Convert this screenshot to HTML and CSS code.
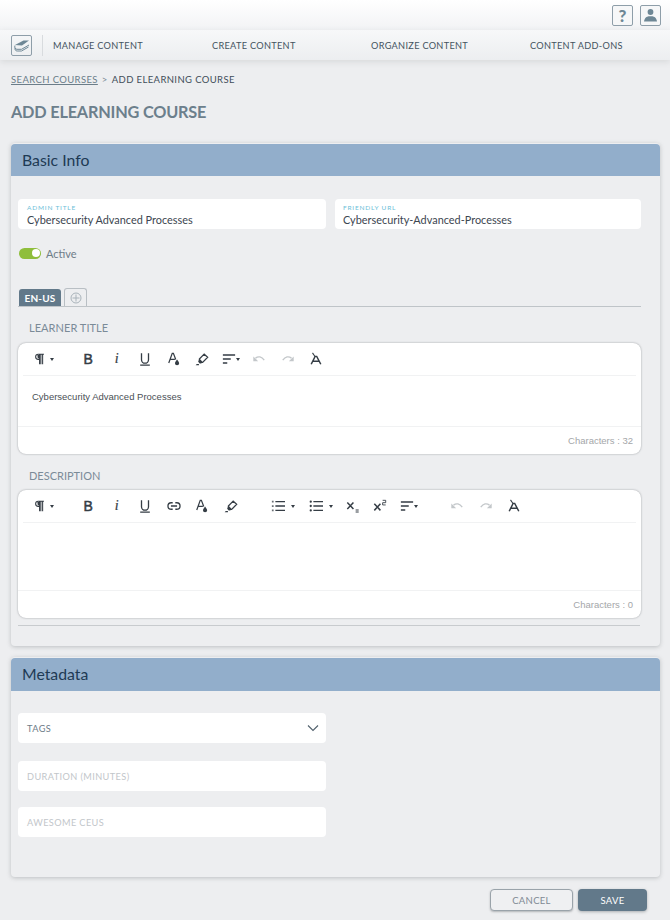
FILE: index.html
```html
<!DOCTYPE html>
<html lang="en">
<head>
<meta charset="utf-8">
<title>Add eLearning Course</title>
<link rel="stylesheet" href="styles.css">
</head>
<body>
<svg class="sprite" width="0" height="0" aria-hidden="true">
  <symbol id="i-para" viewBox="0 0 16 16"><path d="M7.500 14V2.500H6a3 3 0 0 0 0 6h1.500M7.500 2.500h5M9 2.500V14M11 2.500V14" fill="none" stroke="currentColor" stroke-width="1.200"/><path d="M5 3.500h2.500v4H5.500z" fill="currentColor"/></symbol>
  <symbol id="i-under" viewBox="0 0 16 16"><path d="M4 1.500v7.300a4 4 0 0 0 8 0V1.500M2.500 15h11" fill="none" stroke="currentColor" stroke-width="1.500"/></symbol>
  <symbol id="i-color" viewBox="0 0 16 16"><path d="M2 12.500 6 1.500h1.300L10 8.500M3.800 8.500h5.200" fill="none" stroke="currentColor" stroke-width="1.400"/><path d="M11.500 8.500c1.100 1.700 2.400 3 2.400 4.300a2.400 2.400 0 0 1-4.800 0c0-1.300 1.300-2.600 2.400-4.300z" fill="currentColor"/></symbol>
  <symbol id="i-eraser" viewBox="0 0 16 16"><path d="m5 8 5.500-5.500 4 3.500-5.800 6H6.700L5 10.200z" fill="none" stroke="currentColor" stroke-width="1.400"/><path d="m5.300 7.800 3.500 3.500-1.700 1.700H5.400L3.600 11z" fill="currentColor"/><path d="M.800 15h3.700v-1.200h-2.500z" fill="currentColor"/></symbol>
  <symbol id="i-align" viewBox="0 0 16 16"><path d="M1 3.500h14M1 8h9M1 12.500h5" fill="none" stroke="currentColor" stroke-width="1.600"/></symbol>
  <symbol id="i-undo" viewBox="0 0 16 16"><path d="M4 7c3.300-2.500 7-1.800 10 2.300" fill="none" stroke="currentColor" stroke-width="1.500"/><path d="M1.500 5v5.500H7z" fill="currentColor"/></symbol>
  <symbol id="i-redo" viewBox="0 0 16 16"><path d="M12 7C8.700 4.500 5 5.200 2 9.300" fill="none" stroke="currentColor" stroke-width="1.500"/><path d="M14.500 5v5.500H9z" fill="currentColor"/></symbol>
  <symbol id="i-clear" viewBox="0 0 16 16"><path d="M2.500 14 7 5h1.800L13.500 14M4.800 10.500h6.400" fill="none" stroke="currentColor" stroke-width="1.700"/><path d="m4 1 3 4.500" fill="none" stroke="currentColor" stroke-width="1.200"/></symbol>
  <symbol id="i-link" viewBox="0 0 16 16"><path d="M6.500 4.300H4.800a3.700 3.700 0 0 0 0 7.400h1.700M9.500 4.300h1.700a3.700 3.700 0 0 1 0 7.400H9.500M4.500 8h7" fill="none" stroke="currentColor" stroke-width="1.500"/></symbol>
  <symbol id="i-ol" viewBox="0 0 16 16"><path d="M5 3h11M5 8h11M5 13h11" fill="none" stroke="currentColor" stroke-width="1.500"/><path d="M1 2h2v2H1zM1 7h2v2H1zM1 12h2v2H1z" fill="currentColor" opacity=".75"/></symbol>
  <symbol id="i-ul" viewBox="0 0 16 16"><path d="M5 3h11M5 8h11M5 13h11" fill="none" stroke="currentColor" stroke-width="1.500"/><circle cx="2" cy="3" r="1.300" fill="currentColor"/><circle cx="2" cy="8" r="1.300" fill="currentColor"/><circle cx="2" cy="13" r="1.300" fill="currentColor"/></symbol>
  <symbol id="i-sub" viewBox="0 0 16 16"><path d="m1.500 4 7 7.500M8.500 4l-7 7.500" fill="none" stroke="currentColor" stroke-width="1.700"/><path d="M11 12h3.500v1.200H11zM11 14.200h3.500v1.200H11z" fill="currentColor"/></symbol>
  <symbol id="i-sup" viewBox="0 0 16 16"><path d="m1.500 5.500 7 7.500M8.500 5.500l-7 7.500" fill="none" stroke="currentColor" stroke-width="1.700"/><path d="M11 1.500h3.500v2.700H11v2.600h3.500" fill="none" stroke="currentColor"/></symbol>
</svg>

<header class="topbar">
  <a class="square-btn help">?</a>
  <a class="square-btn">
    <svg width="15" height="15" viewBox="0 0 15 15"><circle cx="7.500" cy="4" r="2.900" fill="#6e8795"/><path d="M1 13.500c.4-3.600 3-5 4.500-5.200h4c1.500.2 4.100 1.600 4.500 5.200z" fill="#6e8795"/></svg>
  </a>
</header>
<nav class="navbar">
  <div class="nav-logo">
    <span class="logo-box">
      <svg width="16" height="14" viewBox="0 0 16 14"><path d="M1 7 9.500 2.500H15L8 7.500z" fill="#6e8795"/><path d="M1 7.500c-.8 2 .3 3.800 2 3.800h4.500l7.500-4.300M1.200 10c-.6 1.600.3 3 2 3h4.300l7-4" fill="none" stroke="#6e8795" stroke-width="1"/></svg>
    </span>
  </div>
  <ul class="nav-items">
    <li>MANAGE CONTENT</li>
    <li>CREATE CONTENT</li>
    <li>ORGANIZE CONTENT</li>
    <li>CONTENT ADD-ONS</li>
  </ul>
</nav>

<main class="page">
  <p class="crumbs"><a>SEARCH COURSES</a><span class="sep">&gt;</span><span>ADD ELEARNING COURSE</span></p>
  <h1 class="page-title">ADD ELEARNING COURSE</h1>

  <section class="card card-basic">
    <h2 class="card-head card-head-basic">Basic Info</h2>
    <div class="card-body card-body-basic">
      <div class="field-row">
        <div class="field"><label>ADMIN TITLE</label><div class="value">Cybersecurity Advanced Processes</div></div>
        <div class="field"><label>FRIENDLY URL</label><div class="value">Cybersecurity-Advanced-Processes</div></div>
      </div>
      <div class="toggle-row"><span class="toggle"></span><span class="toggle-label">Active</span></div>
      <div class="tabs">
        <span class="tab-active">EN-US</span>
        <span class="tab-add"><svg width="12" height="12" viewBox="0 0 12 12"><circle cx="6" cy="6" r="5" fill="none" stroke="#a9b3ba"/><path d="M6 2.500v7M2.500 6h7" stroke="#a9b3ba"/></svg></span>
      </div>

      <h3 class="editor-label label-first">LEARNER TITLE</h3>
      <div class="editor">
        <div class="toolbar">
          <span class="tb tb-para"><svg class="ic"><use href="#i-para"/></svg><i class="caret"></i></span>
          <span class="tb tb-b">B</span>
          <span class="tb tb-i">i</span>
          <span class="tb"><svg class="ic"><use href="#i-under"/></svg></span>
          <span class="tb"><svg class="ic"><use href="#i-color"/></svg></span>
          <span class="tb"><svg class="ic"><use href="#i-eraser"/></svg></span>
          <span class="tb"><svg class="ic"><use href="#i-align"/></svg><i class="caret caret-tight"></i></span>
          <span class="tb off"><svg class="ic"><use href="#i-undo"/></svg></span>
          <span class="tb off"><svg class="ic"><use href="#i-redo"/></svg></span>
          <span class="tb"><svg class="ic"><use href="#i-clear"/></svg></span>
        </div>
        <div class="editor-text editor-text-short">Cybersecurity Advanced Processes</div>
        <div class="editor-foot">Characters : 32</div>
      </div>

      <h3 class="editor-label label-second">DESCRIPTION</h3>
      <div class="editor">
        <div class="toolbar">
          <span class="tb tb-para"><svg class="ic"><use href="#i-para"/></svg><i class="caret"></i></span>
          <span class="tb tb-b">B</span>
          <span class="tb tb-i">i</span>
          <span class="tb"><svg class="ic"><use href="#i-under"/></svg></span>
          <span class="tb"><svg class="ic"><use href="#i-link"/></svg></span>
          <span class="tb"><svg class="ic"><use href="#i-color"/></svg></span>
          <span class="tb"><svg class="ic"><use href="#i-eraser"/></svg></span>
          <span class="tb tb-list tb-after-group"><svg class="ic"><use href="#i-ol"/></svg><i class="caret caret-wide"></i></span>
          <span class="tb tb-list"><svg class="ic"><use href="#i-ul"/></svg><i class="caret caret-wide"></i></span>
          <span class="tb tb-sub"><svg class="ic"><use href="#i-sub"/></svg></span>
          <span class="tb"><svg class="ic"><use href="#i-sup"/></svg></span>
          <span class="tb"><svg class="ic"><use href="#i-align"/></svg><i class="caret caret-tight"></i></span>
          <span class="tb off tb-undo2"><svg class="ic"><use href="#i-undo"/></svg></span>
          <span class="tb off"><svg class="ic"><use href="#i-redo"/></svg></span>
          <span class="tb"><svg class="ic"><use href="#i-clear"/></svg></span>
        </div>
        <div class="editor-text editor-text-tall"></div>
        <div class="editor-foot">Characters : 0</div>
      </div>
      <div class="end-rule"></div>
    </div>
  </section>

  <section class="card card-meta">
    <h2 class="card-head">Metadata</h2>
    <div class="card-body">
      <div class="input input-select"><span>TAGS</span>
        <svg width="12" height="8" viewBox="0 0 12 8"><path d="m1 1.500 5 5 5-5" fill="none" stroke="#50606c" stroke-width="1.100"/></svg>
      </div>
      <div class="input input-ph">DURATION (MINUTES)</div>
      <div class="input input-ph">AWESOME CEUS</div>
    </div>
  </section>

  <div class="actions">
    <button class="btn btn-cancel">CANCEL</button>
    <button class="btn btn-save">SAVE</button>
  </div>
</main>
</body>
</html>
```
FILE: styles.css
```css
* { box-sizing: border-box; }
html, body { margin: 0; padding: 0; }
body { width: 670px; height: 920px; overflow: hidden; background: #edeef0; font-family: Lato, "Liberation Sans", sans-serif; color: #3f4d59; }
.sprite { position: absolute; }

.topbar { height: 30px; display: flex; justify-content: flex-end; align-items: flex-start; gap: 7px; padding: 5px 9px 0 0; background: linear-gradient(#ffffff, #f2f3f5); }
.square-btn { width: 21px; height: 21px; border: 1px solid #8e9ea9; border-radius: 2px; display: flex; align-items: center; justify-content: center; background: #f6f7f8; }
.help { color: #6e8795; font-weight: 900; font-size: 17px; }

.navbar { height: 30px; display: flex; align-items: center; background: linear-gradient(#f7f8f9, #eceef0); box-shadow: 0 2px 6px rgba(120,125,130,.18); position: relative; }
.nav-logo { flex: none; width: 43px; height: 21px; padding-left: 11px; border-right: 1px solid #d8dbde; }
.logo-box { width: 21px; height: 21px; border: 1px solid #8e9ea9; border-radius: 2px; display: flex; align-items: center; justify-content: center; }
.nav-items { list-style: none; margin: 0; padding: 0 0 0 10px; display: flex; flex: none; }
.nav-items li { width: 159px; font-size: 9.200px; letter-spacing: .3px; color: #44535f; white-space: nowrap; }

.page { padding: 0 10px 0 11px; }
.crumbs { margin: 13px 0 0; height: 14px; line-height: 14px; font-size: 9.500px; letter-spacing: .38px; color: #3f4d59; display: flex; }
.crumbs a { color: #6b7d89; text-decoration: underline; }
.sep { margin: 0 4px; color: #7d8b95; }
.page-title { margin: 14px 0 0; height: 22px; line-height: 22px; font-size: 16.300px; font-weight: 700; letter-spacing: -.2px; color: #6c7f8c; }

.card { background: #edeef0; border-radius: 4px; box-shadow: 0 1px 4px rgba(100,105,110,.35); padding-top: 1px; }
.card-basic { margin-top: 20px; height: 503px; }
.card-meta { margin-top: 11px; height: 220px; }
.card-head { margin: 0; height: 33px; line-height: 31px; padding-left: 11px; background: #92aecb; border-radius: 4px 4px 0 0; font-size: 15.800px; font-weight: 400; color: #1e3a54; }
.card-head-basic { height: 32px; }
.card-body { padding: 22px 19px 0 7px; }
.card-body-basic { padding-top: 23px; }

.field-row { display: flex; gap: 9px; }
.field { height: 30px; background: #fff; border-radius: 4px; padding: 5px 9px 0; flex: 0 0 308px; }
.field + .field { flex: 0 0 306px; padding-left: 8px; }
.field label { display: block; font-size: 6.500px; line-height: 7px; letter-spacing: .8px; color: #6cc0d8; }
.value { font-size: 10.900px; line-height: 15px; color: #3c4650; margin-top: 1px; white-space: nowrap; }

.toggle-row { display: flex; align-items: center; gap: 5px; margin-top: 17px; margin-left: 1px; height: 14px; }
.toggle { width: 22px; height: 11px; border-radius: 6px; background: #8fbe3c; position: relative; }
.toggle::after { content: ""; position: absolute; right: 1.500px; top: 1.500px; width: 8px; height: 8px; border-radius: 50%; background: #fff; }
.toggle-label { font-size: 11px; color: #6e7c88; }

.tabs { display: flex; gap: 3px; margin-top: 29px; height: 18px; padding-left: 1px; border-bottom: 1px solid #bfc4c8; align-items: flex-end; }
.tab-active { width: 42px; height: 17px; background: #62798a; color: #fff; font-size: 10px; font-weight: 700; line-height: 18px; text-align: center; border-radius: 3px 3px 0 0; letter-spacing: .2px; }
.tab-add { width: 23px; height: 18px; border: 1px solid #b9bfc4; border-bottom: 0; border-radius: 3px 3px 0 0; display: flex; align-items: center; justify-content: center; }

.editor-label { margin: 0; font-size: 11px; line-height: 14px; font-weight: 400; color: #7b8b98; padding-left: 11px; }
.label-first { margin-top: 14px; margin-bottom: 8px; letter-spacing: .05px; }
.label-second { margin-top: 15px; margin-bottom: 7px; }

.editor { background: #fff; border-radius: 8px; box-shadow: 0 0 2px rgba(90,95,100,.6); width: 623px; }
.toolbar { height: 33px; margin: 0 5px; display: flex; align-items: center; padding: 0 0 0 1px; border-bottom: 1px solid #f1f2f3; color: #353d45; }
.tb { flex: 0 0 28.500px; height: 16px; display: flex; align-items: center; justify-content: center; position: relative; font-family: "Liberation Sans", sans-serif; font-size: 14px; }
.tb.off { color: #c3c7ca; }
.ic { width: 14px; height: 14px; display: block; flex: none; }
.tb-para { flex-basis: 50px; justify-content: flex-start; padding-left: 9px; }
.tb-b { -webkit-text-stroke: .5px currentColor; }
.tb-i { font-style: italic; font-family: "Liberation Serif", serif; font-size: 14px; -webkit-text-stroke: .2px currentColor; }
.caret { display: inline-block; width: 0; height: 0; border: 2.500px solid transparent; border-top: 3px solid currentColor; border-bottom: 0; margin-left: 3px; }
.caret-tight { margin-left: 0; }
.caret-wide { margin-left: 6px; }
.tb-after-group { margin-left: 20px; }
.tb-list { flex-basis: 37.500px; justify-content: flex-start; padding-left: 6px; }
.tb-sub { flex-basis: 26px; }
.tb-undo2 { margin-left: 20px; }

.editor-text { font-family: "Liberation Sans", sans-serif; font-size: 9.500px; line-height: 12px; color: #4a4f55; padding: 15px 14px 0; border-bottom: 1px solid #f1f2f3; }
.editor-text-short { height: 51px; }
.editor-text-tall { height: 68px; }
.editor-foot { height: 27px; font-family: "Liberation Sans", sans-serif; font-size: 9.500px; line-height: 27px; color: #a4a6a9; text-align: right; padding-right: 8px; }

.end-rule { height: 1px; background: #c8cbce; margin-top: 7px; width: 622px; }

.card-meta .card-body { padding-top: 22px; }
.input { width: 308px; height: 30px; background: #fff; border-radius: 4px; padding: 0 9px; display: flex; align-items: center; font-size: 9.200px; letter-spacing: .4px; color: #6e7c88; }
.input-select { justify-content: space-between; padding-right: 7px; }
.input-ph { color: #c2c6ca; margin-top: 18px; }
.input-ph + .input-ph { margin-top: 16px; }

.actions { display: flex; justify-content: flex-end; gap: 5px; padding-right: 13px; margin-top: 12px; }
.btn { height: 22px; padding: 0; border-radius: 4px; font-family: Lato, sans-serif; font-size: 9.500px; letter-spacing: .3px; }
.btn-cancel { width: 83px; background: #eff0f2; border: 1px solid #9aa3aa; color: #7f8a94; box-shadow: 0 1px 2px rgba(90,95,100,.4); }
.btn-save { width: 69px; background: #62798a; border: 0; color: #fff; box-shadow: 0 1px 3px rgba(90,95,100,.45); }
```
